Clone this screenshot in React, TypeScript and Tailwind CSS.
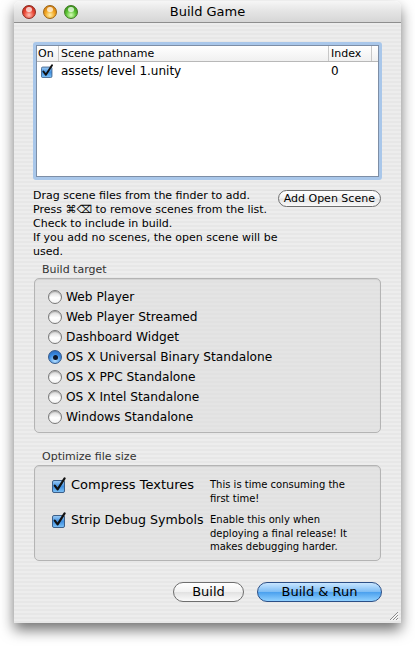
import type { ReactNode } from "react";

const font = { fontFamily: '"DejaVu Sans", "Liberation Sans", sans-serif' };

const targets = [
  "Web Player",
  "Web Player Streamed",
  "Dashboard Widget",
  "OS X Universal Binary Standalone",
  "OS X PPC Standalone",
  "OS X Intel Standalone",
  "Windows Standalone",
];

function Light({ tone }: { tone: "red" | "amber" | "green" }) {
  const cls =
    tone === "red"
      ? "bg-[radial-gradient(circle_at_50%_75%,#ffc4b8_0%,#ea4a38_45%,#b21f12_100%)] border-[#8c2a1f]"
      : tone === "amber"
        ? "bg-[radial-gradient(circle_at_50%_75%,#fff0a8_0%,#f2a623_45%,#c06a0a_100%)] border-[#9a6414]"
        : "bg-[radial-gradient(circle_at_50%_75%,#d8ffb8_0%,#5cc334_45%,#2a7d10_100%)] border-[#3f7a22]";
  return (
    <span className={`relative block h-[14px] w-[14px] rounded-full border ${cls}`}>
      <span className="absolute left-[3px] top-[1px] h-[5px] w-[6px] rounded-full bg-white/70" />
    </span>
  );
}

function AquaCheck({ size = 13 }: { size?: number }) {
  return (
    <svg width={size + 3} height={size + 3} viewBox="0 0 16 16" className="shrink-0">
      <defs>
        <linearGradient id="cb" x1="0" y1="0" x2="0" y2="1">
          <stop offset="0" stopColor="#9fcdf5" />
          <stop offset="0.5" stopColor="#3f8fe0" />
          <stop offset="1" stopColor="#7fc3f7" />
        </linearGradient>
      </defs>
      <rect x="0.5" y="3.5" width="12" height="12" rx="1.5" fill="url(#cb)" stroke="#3d5f88" />
      <path d="M2.8 8.6 L5.6 12.4 L12.6 1.4" fill="none" stroke="#111" strokeWidth="2.2" strokeLinecap="round" strokeLinejoin="round" />
    </svg>
  );
}

function Radio({ on }: { on: boolean }) {
  return on ? (
    <span className="flex h-[14px] w-[14px] shrink-0 items-center justify-center rounded-full border border-[#34598a] bg-[radial-gradient(circle_at_50%_80%,#b8e0ff_0%,#3a8ae0_55%,#2a5fae_100%)]">
      <span className="h-[5px] w-[5px] rounded-full bg-[#101828]" />
    </span>
  ) : (
    <span className="block h-[14px] w-[14px] shrink-0 rounded-full border border-[#7a7a7a] bg-[linear-gradient(180deg,#d4d4d4_0%,#ffffff_55%,#f4f4f4_100%)] shadow-[inset_0_1px_1px_rgba(0,0,0,0.25)]" />
  );
}

function GroupBox({ label, children, className }: { label: string; children: ReactNode; className?: string }) {
  return (
    <div className={className}>
      <div className="pl-[9px] text-[11px] leading-[14px] text-[#333]">{label}</div>
      <div className="mx-px mt-px rounded-[5px] border border-[#b4b4b4] bg-[#dedede]/60 shadow-[inset_0_1px_1px_rgba(0,0,0,0.08)]">
        {children}
      </div>
    </div>
  );
}

function PillButton({ children, primary, className }: { children: ReactNode; primary?: boolean; className?: string }) {
  return (
    <button
      type="button"
      className={`flex items-center justify-center whitespace-nowrap rounded-full border leading-none text-black ${
        primary
          ? "border-[#2c4f86] bg-[linear-gradient(180deg,#c8e6ff_0%,#7ebdf5_48%,#4ba1ee_52%,#8fd0ff_100%)]"
          : "border-[#6e6e6e] bg-[linear-gradient(180deg,#ffffff_0%,#f2f2f2_48%,#e2e2e2_52%,#fafafa_100%)]"
      } ${className ?? ""}`}
    >
      {children}
    </button>
  );
}

export default function App() {
  return (
    <div className="h-[646px] w-[415px] bg-white pl-[14px] pt-px" style={font}>
      <div className="flex h-[622px] w-[387px] flex-col overflow-hidden rounded-t-[6px] shadow-[0_7px_14px_rgba(0,0,0,0.55)]">
        {/* title bar */}
        <div className="relative flex h-[22px] shrink-0 items-center border-b border-[#8e8e8e] bg-[linear-gradient(180deg,#f6f6f6_0%,#e4e4e4_50%,#d6d6d6_100%)] px-[8px]">
          <div className="flex gap-[7px]">
            <Light tone="red" />
            <Light tone="amber" />
            <Light tone="green" />
          </div>
          <div className="absolute inset-x-0 top-0 flex h-full items-center justify-center text-[13px] text-black">
            Build Game
          </div>
        </div>

        {/* content */}
        <div className="relative flex flex-1 flex-col bg-[repeating-linear-gradient(180deg,#ededed_0px,#ededed_2px,#e7e7e7_2px,#e7e7e7_4px)] px-[19px] pt-[19px]">
          {/* scene list */}
          <div className="h-[138px] rounded-[3px] border-[3px] border-[#a9c7ea]">
            <div className="flex h-full flex-col border border-[#7d8ea6] bg-white">
              <div className="flex h-[16px] shrink-0 border-b border-[#b8b8b8] bg-[linear-gradient(180deg,#ffffff_0%,#f0f0f0_100%)] text-[11px] leading-[15px] text-black">
                <div className="w-[22px] border-r border-[#c8c8c8] pl-[1px]">On</div>
                <div className="w-[270px] border-r border-[#c8c8c8] pl-[2px]">Scene pathname</div>
                <div className="w-[43px] border-r border-[#c8c8c8] pl-[2px]">Index</div>
              </div>
              <div className="flex h-[17px] items-center text-[12px] text-black">
                <div className="flex w-[22px] justify-center">
                  <AquaCheck size={11} />
                </div>
                <div className="w-[270px] pl-[2px]">assets/ level 1.unity</div>
                <div className="pl-[2px]">0</div>
              </div>
            </div>
          </div>

          {/* help text */}
          <div className="mt-[9px] flex items-start justify-between">
            <div className="w-[246px] text-[11px] leading-[14px] text-black">
              Drag scene files from the finder to add.
              <br />
              Press ⌘⌫ to remove scenes from the list.
              <br />
              Check to include in build.
              <br />
              If you add no scenes, the open scene will be used.
            </div>
            <PillButton className="mr-px mt-px h-[17px] w-[104px] text-[11px]">Add Open Scene</PillButton>
          </div>

          {/* build target */}
          <GroupBox label="Build target" className="mt-[4px]">
            <div className="flex flex-col pb-[5px] pl-[13px] pt-[8px]">
              {targets.map((t) => (
                <label key={t} className="flex h-[20px] items-center gap-[4px] text-[12.2px] text-black">
                  <Radio on={t === "OS X Universal Binary Standalone"} />
                  <span>{t}</span>
                </label>
              ))}
            </div>
          </GroupBox>

          {/* optimize */}
          <GroupBox label="Optimize file size" className="mt-[17px]">
            <div className="flex flex-col gap-[7px] pb-[6px] pl-[17px] pt-[11px]">
              <div className="flex items-start">
                <div className="flex w-[158px] items-center gap-[3px] text-[13px] leading-[16px] text-black">
                  <AquaCheck size={13} />
                  <span>Compress Textures</span>
                </div>
                <div className="w-[140px] pt-[1px] text-[10px] leading-[13.5px] text-black">
                  This is time consuming the first time!
                </div>
              </div>
              <div className="flex items-start">
                <div className="flex w-[158px] items-center gap-[3px] text-[12.6px] leading-[16px] text-black">
                  <AquaCheck size={13} />
                  <span>Strip Debug Symbols</span>
                </div>
                <div className="w-[140px] pt-[1px] text-[10px] leading-[13.5px] text-black">
                  Enable this only when deploying a final release! It makes debugging harder.
                </div>
              </div>
            </div>
          </GroupBox>

          {/* buttons */}
          <div className="mt-[21px] flex justify-end gap-[13px]">
            <PillButton className="h-[20px] w-[71px] text-[13px]">Build</PillButton>
            <PillButton primary className="h-[20px] w-[125px] text-[13px]">
              Build &amp; Run
            </PillButton>
          </div>

          {/* resize grip */}
          <svg width="12" height="12" viewBox="0 0 12 12" className="absolute bottom-[2px] right-[2px]">
            <path d="M11 3 L3 11 M11 6 L6 11 M11 9 L9 11" stroke="#8a8a8a" strokeWidth="1" />
            <path d="M11.5 4 L4 11.5 M11.5 7 L7 11.5 M11.5 10 L10 11.5" stroke="#ffffff" strokeWidth="1" />
          </svg>
        </div>
      </div>
    </div>
  );
}
